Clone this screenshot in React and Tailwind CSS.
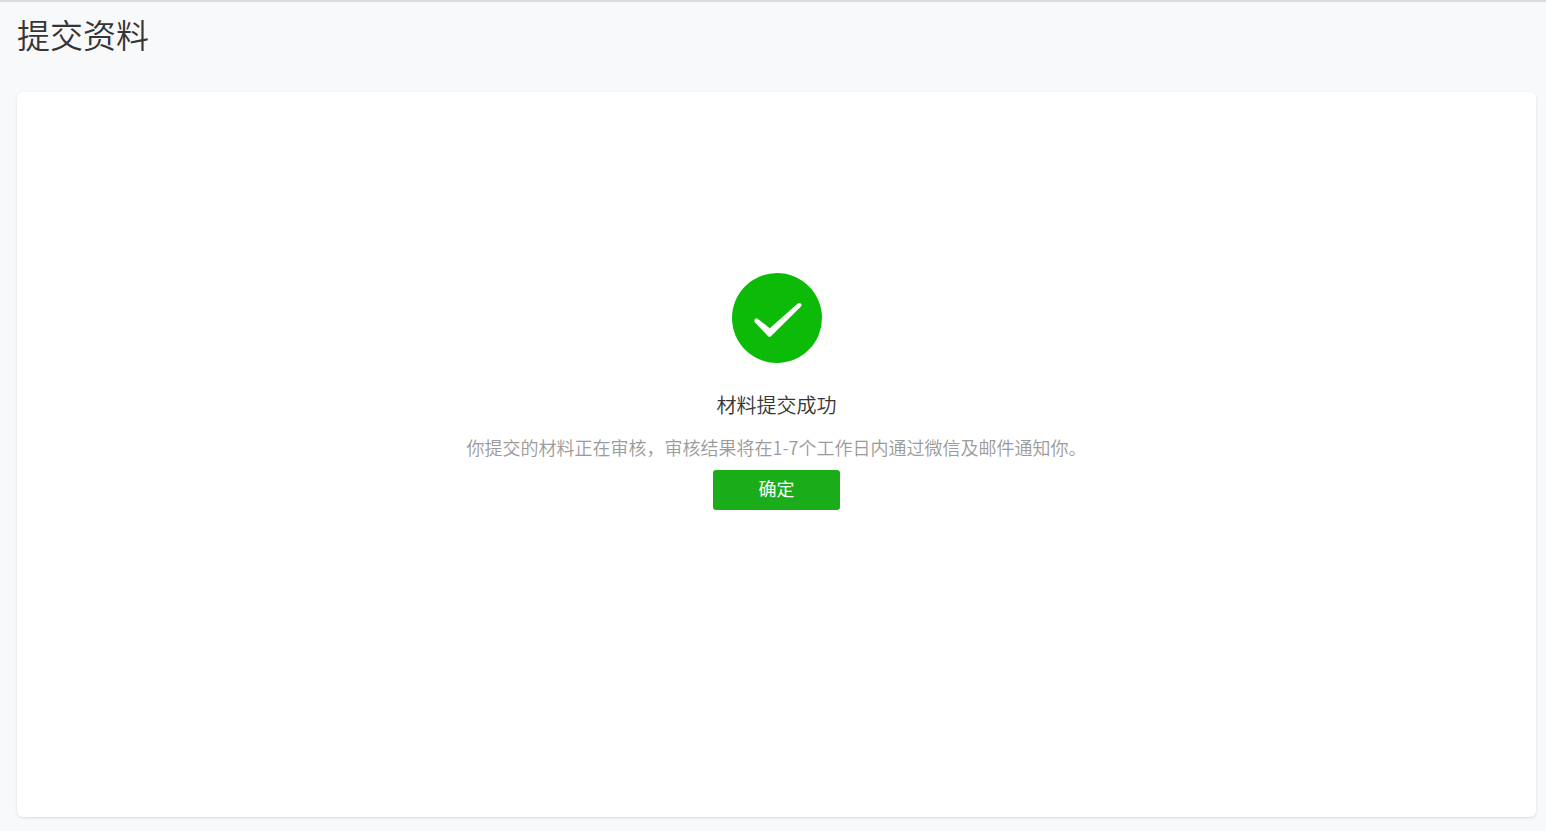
const SuccessIcon = () => (
  <svg viewBox="0 0 90 90" className="w-[90px] h-[90px]" aria-hidden="true">
    <circle cx="45" cy="45" r="45" fill="#0bbb08" />
    <path
      d="M25.9 45.9 Q24.3 44.7 22.8 46.2 Q21.8 47.9 23.1 49.5 L36.1 63.2 Q37.6 64.6 39.2 63 L69 33.6 Q70.2 32 69 30.7 Q67.5 29.3 65.8 30.4 L37.8 55.2 Z"
      fill="#fff"
    />
  </svg>
);

const App = () => {
  return (
    <div className="min-h-screen flex flex-col bg-[#f8f9fb] border-t-2 border-[#dadbde] pl-[17px] pr-[10px] pb-[14px] font-['Noto_Sans_CJK_SC',sans-serif] font-[350]">
      <h1 className="pt-2 text-[33px] leading-[48px] text-[#353535]">提交资料</h1>

      <main className="mt-[34px] flex-1 flex flex-col items-center rounded-md bg-white shadow-[0_1px_3px_rgba(0,0,0,0.12)] pt-[181px] pb-8">
        <SuccessIcon />
        <h2 className="mt-7 text-xl leading-7 text-[#353535]">材料提交成功</h2>
        <p className="mt-[14px] text-lg leading-7 text-[#9a9a9a] text-center">
          你提交的材料正在审核，审核结果将在1-7个工作日内通过微信及邮件通知你。
        </p>
        <button
          type="button"
          className="mt-[9px] w-[127px] h-10 pb-1 rounded-[3px] bg-[#1aad19] hover:bg-[#179b16] text-lg leading-7 font-normal text-white cursor-pointer"
        >
          确定
        </button>
      </main>
    </div>
  );
};

export default App;
